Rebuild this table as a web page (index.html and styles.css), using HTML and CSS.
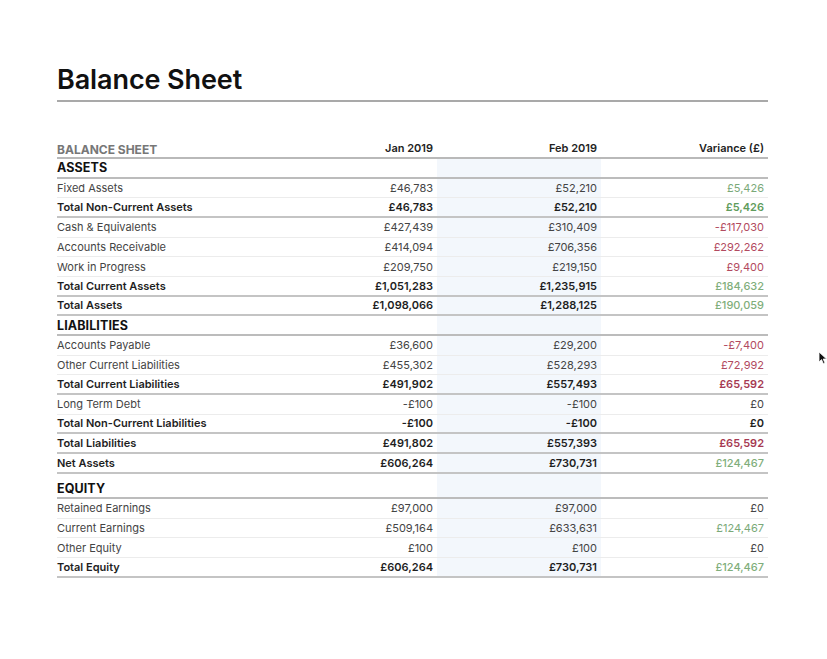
FILE: index.html
```html
<!DOCTYPE html>
<html lang="en">
<head>
<meta charset="utf-8">
<title>Balance Sheet</title>
<link rel="stylesheet" href="styles.css">
</head>
<body>
<main class="page">
  <h1 class="title">Balance Sheet</h1>
  <section class="sheet">
    <div class="row head">
      <div class="label caption">BALANCE SHEET</div>
      <div class="num">Jan 2019</div>
      <div class="num">Feb 2019</div>
      <div class="num">Variance (£)</div>
    </div>

    <div class="row section"><div class="label">ASSETS</div><div></div><div class="band"></div><div></div></div>
    <div class="row"><div class="label">Fixed Assets</div><div class="num">£46,783</div><div class="num band">£52,210</div><div class="num pos">£5,426</div></div>
    <div class="row total"><div class="label">Total Non-Current Assets</div><div class="num">£46,783</div><div class="num band">£52,210</div><div class="num pos">£5,426</div></div>
    <div class="row"><div class="label">Cash &amp; Equivalents</div><div class="num">£427,439</div><div class="num band">£310,409</div><div class="num neg">-£117,030</div></div>
    <div class="row"><div class="label">Accounts Receivable</div><div class="num">£414,094</div><div class="num band">£706,356</div><div class="num neg">£292,262</div></div>
    <div class="row"><div class="label">Work in Progress</div><div class="num">£209,750</div><div class="num band">£219,150</div><div class="num neg">£9,400</div></div>
    <div class="row total"><div class="label">Total Current Assets</div><div class="num">£1,051,283</div><div class="num band">£1,235,915</div><div class="num pos light">£184,632</div></div>
    <div class="row total"><div class="label">Total Assets</div><div class="num">£1,098,066</div><div class="num band">£1,288,125</div><div class="num pos light">£190,059</div></div>

    <div class="row section"><div class="label">LIABILITIES</div><div></div><div class="band"></div><div></div></div>
    <div class="row"><div class="label">Accounts Payable</div><div class="num">£36,600</div><div class="num band">£29,200</div><div class="num neg">-£7,400</div></div>
    <div class="row"><div class="label">Other Current Liabilities</div><div class="num">£455,302</div><div class="num band">£528,293</div><div class="num neg">£72,992</div></div>
    <div class="row total"><div class="label">Total Current Liabilities</div><div class="num">£491,902</div><div class="num band">£557,493</div><div class="num neg">£65,592</div></div>
    <div class="row"><div class="label">Long Term Debt</div><div class="num">-£100</div><div class="num band">-£100</div><div class="num">£0</div></div>
    <div class="row total"><div class="label">Total Non-Current Liabilities</div><div class="num">-£100</div><div class="num band">-£100</div><div class="num">£0</div></div>
    <div class="row total"><div class="label">Total Liabilities</div><div class="num">£491,802</div><div class="num band">£557,393</div><div class="num neg">£65,592</div></div>
    <div class="row total"><div class="label">Net Assets</div><div class="num">£606,264</div><div class="num band">£730,731</div><div class="num pos light">£124,467</div></div>

    <div class="row spacer"><div></div><div></div><div class="band"></div><div></div></div>

    <div class="row section"><div class="label">EQUITY</div><div></div><div class="band"></div><div></div></div>
    <div class="row"><div class="label">Retained Earnings</div><div class="num">£97,000</div><div class="num band">£97,000</div><div class="num">£0</div></div>
    <div class="row"><div class="label">Current Earnings</div><div class="num">£509,164</div><div class="num band">£633,631</div><div class="num pos">£124,467</div></div>
    <div class="row"><div class="label">Other Equity</div><div class="num">£100</div><div class="num band">£100</div><div class="num">£0</div></div>
    <div class="row total"><div class="label">Total Equity</div><div class="num">£606,264</div><div class="num band">£730,731</div><div class="num pos light">£124,467</div></div>
  </section>
  <svg class="cursor" width="10" height="14" viewBox="0 0 10 14" aria-hidden="true"><path d="M1 1 L1 11 L3.5 8.6 L5.4 12.8 L7 12.1 L5.2 8 L8.6 8 Z" fill="#111" stroke="#fff" stroke-width="0.8"/></svg>
</main>
</body>
</html>
```

FILE: styles.css
```css
* { box-sizing: border-box; }

html, body {
  margin: 0;
  padding: 0;
  background: #ffffff;
}

body {
  font-family: "Inter", "Liberation Sans", sans-serif;
  color: #333;
}

.page {
  position: relative;
  width: 827px;
  height: 659px;
  padding: 61px 59px 0 57px;
}

.title {
  margin: 0;
  font-size: 27px;
  line-height: 37px;
  font-weight: 600;
  color: #111;
  letter-spacing: -0.1px;
  padding-bottom: 2px;
  border-bottom: 2px solid #a9a9a9;
}

.sheet {
  margin-top: 37px;
  width: 711px;
}

.row {
  display: grid;
  grid-template-columns: 216px 164px 164px 167px;
  height: 19.67px;
  border-bottom: 1px solid #ececec;
  font-size: 11px;
  color: #444;
}

.row > div {
  display: flex;
  align-items: center;
}

.label {
  padding-left: 0;
  white-space: nowrap;
}

.num {
  justify-content: flex-end;
  padding-right: 4px;
  white-space: nowrap;
}

.band {
  background: #f3f7fc;
}

.head {
  height: 20px;
  border-bottom: 2px solid #b9b9b9;
  font-weight: 600;
  color: #222;
}

.head > div {
  align-items: flex-end;
  padding-bottom: 2px;
}

.caption {
  font-size: 12px;
  font-weight: 700;
  color: #777;
  padding-bottom: 1px !important;
  margin-bottom: -1px;
}

.section {
  border-bottom: 2px solid #bcbcbc;
}

.section .label {
  font-size: 12.5px;
  font-weight: 700;
  color: #111;
  letter-spacing: 0.1px;
}

.total {
  border-bottom: 2px solid #c4c4c4;
  color: #1e1e1e;
  font-weight: 600;
}

.spacer {
  height: 6px;
  border-bottom: none;
}

.pos { color: #7aa978; }
.neg { color: #b24a60; }
.total .pos { color: #5f9c5c; }
.total .pos.light { color: #7fae7b; font-weight: 500; }
.total .neg { color: #a63a52; }

.cursor {
  position: absolute;
  left: 818px;
  top: 351px;
}
```
